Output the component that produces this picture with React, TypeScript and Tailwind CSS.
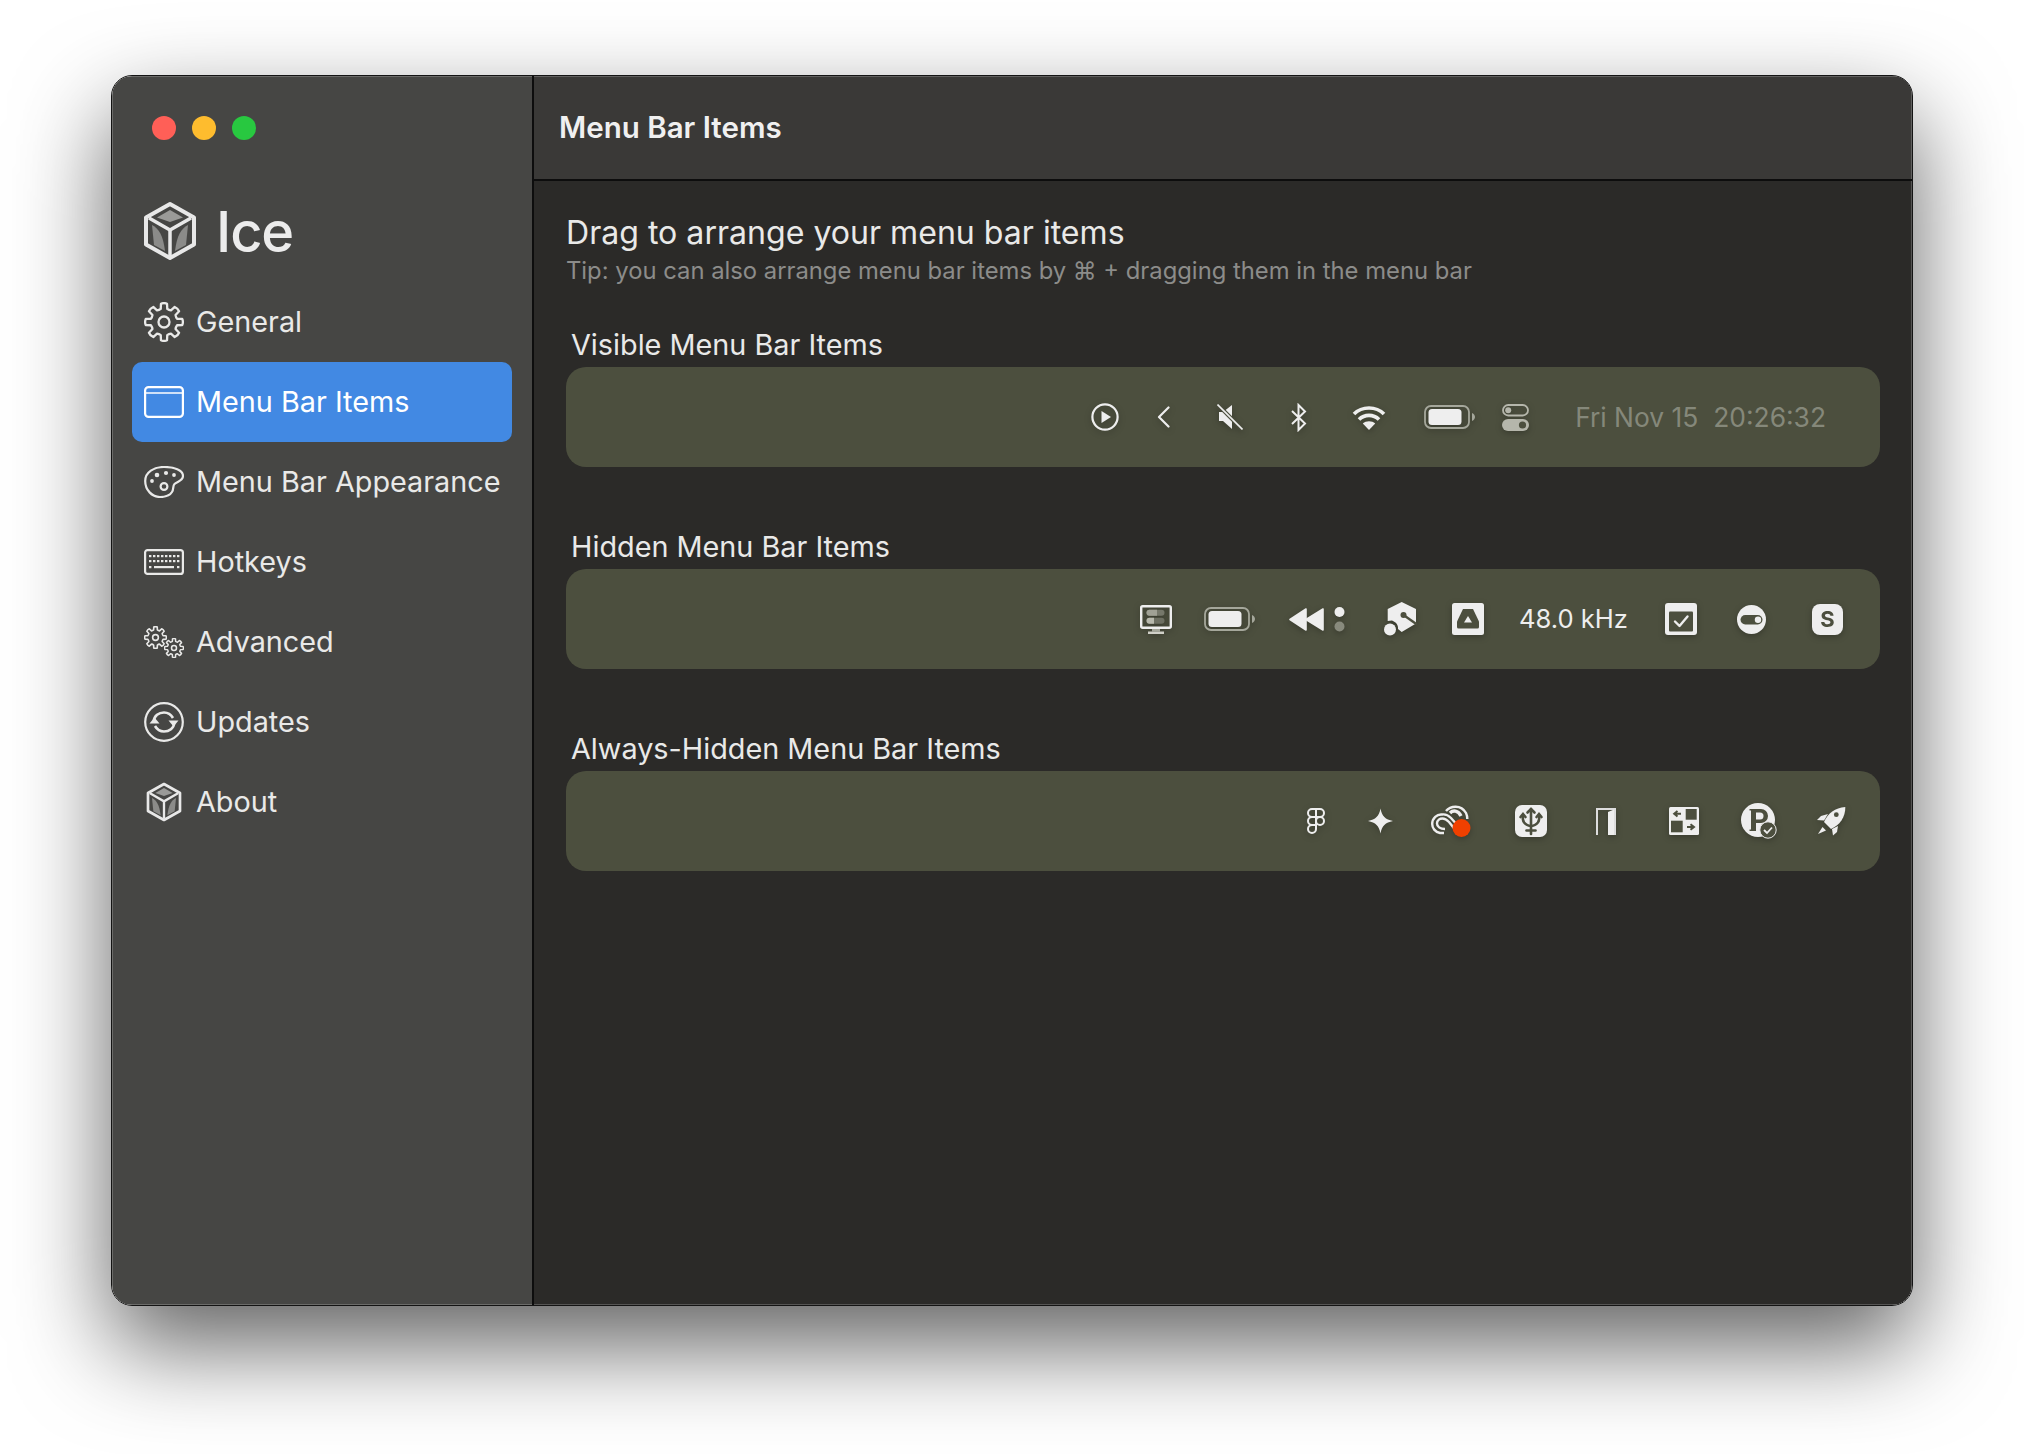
import React from "react";

type I = { className?: string };

function Cube({ className }: I) {
  return (
    <svg viewBox="0 0 54 60" className={className} fill="none">
      <path d="M27 3 L51 16.5 V43.5 L27 57 L3 43.5 V16.5 Z" stroke="#e8e8e8" strokeWidth="4" strokeLinejoin="round" />
      <path d="M6 17 L27 29 L48 17" stroke="#e8e8e8" strokeWidth="3.5" />
      <path d="M27 29 V55" stroke="#e8e8e8" strokeWidth="3.5" />
      <path d="M14 16.5 L27 9 L40 16.5 L27 21 Z" fill="#9a9a98" />
      <path d="M9 24 C16 28 20 34 22 50 L11 44 Z" fill="#8b8b89" />
      <path d="M45 24 C38 28 34 34 32 50 L43 44 Z" fill="#8b8b89" />
    </svg>
  );
}

function Gear({ className, hole = 5.5, stroke = 2.3 }: I & { hole?: number; stroke?: number }) {
  const teeth = 8;
  const pts: string[] = [];
  for (let i = 0; i < teeth; i++) {
    const a = (i * Math.PI * 2) / teeth;
    const step = Math.PI / teeth;
    const P = (r: number, t: number) => `${(20 + r * Math.sin(t)).toFixed(2)} ${(20 - r * Math.cos(t)).toFixed(2)}`;
    pts.push(`${i === 0 ? "M" : "L"}${P(18.5, a - step * 0.42)}`);
    pts.push(`Q${P(19.6, a)} ${P(18.5, a + step * 0.42)}`);
    pts.push(`L${P(13.5, a + step * 0.62)}`);
    pts.push(`Q${P(12.8, a + step)} ${P(13.5, a + step * 1.38)}`);
  }
  return (
    <svg viewBox="0 0 40 40" className={className} fill="none" stroke="currentColor" strokeWidth={stroke} strokeLinejoin="round">
      <path d={pts.join(" ") + "Z"} />
      <circle cx="20" cy="20" r={hole} />
    </svg>
  );
}

function GearIcon({ className }: I) {
  return <Gear className={className} />;
}

function Windowed({ className }: I) {
  return (
    <svg viewBox="0 0 40 32" className={className} fill="none" stroke="currentColor" strokeWidth="2.2">
      <rect x="1.1" y="1.1" width="37.8" height="29.8" rx="3.5" />
      <path d="M1 7 H39" strokeWidth="1.6" />
    </svg>
  );
}

function Palette({ className }: I) {
  return (
    <svg viewBox="0 0 40 32" className={className} fill="none" stroke="currentColor" strokeWidth="2.2">
      <path d="M1.2 15 C1.2 6 10 1 20 1 C30 1 39 4 39 10 C39 15 33 15.5 30.5 18 C28.5 20 30 23 28 26 C25.5 30 21 31 16 31 C8 31 1.2 24 1.2 15 Z" />
      <circle cx="20" cy="20.5" r="3.4" />
      <circle cx="8" cy="15" r="1.9" fill="currentColor" stroke="none" />
      <circle cx="13" cy="9" r="2.3" fill="currentColor" stroke="none" />
      <circle cx="22" cy="7" r="2.1" fill="currentColor" stroke="none" />
      <circle cx="30" cy="9" r="1.9" fill="currentColor" stroke="none" />
    </svg>
  );
}

function Keyboard({ className }: I) {
  const row1 = [6, 10, 14, 18, 22, 26, 30, 34];
  const row2 = [6, 10, 14, 18, 22, 26, 30, 34];
  return (
    <svg viewBox="0 0 40 26" className={className} fill="none" stroke="currentColor" strokeWidth="2.2">
      <rect x="1.1" y="1.1" width="37.8" height="23.8" rx="2.5" />
      <g fill="currentColor" stroke="none">
        {row1.map((x) => <rect key={x} x={x - 1} y="6" width="2.4" height="2.2" />)}
        {row2.map((x) => <rect key={x} x={x - 1} y="11" width="2.4" height="2.2" />)}
        <rect x="5" y="17" width="2.4" height="2.2" />
        <rect x="10" y="17" width="20" height="2.2" />
        <rect x="33" y="17" width="2.4" height="2.2" />
      </g>
    </svg>
  );
}

function Gears({ className }: I) {
  return (
    <div className={"relative " + (className ?? "")}>
      <Gear className="absolute left-0 top-0 h-[23px] w-[23px]" hole={5} stroke={2.8} />
      <Gear className="absolute right-0 bottom-0 h-[20px] w-[20px]" hole={5} stroke={3} />
    </div>
  );
}

function Updates({ className }: I) {
  return (
    <svg viewBox="0 0 40 40" className={className} fill="none" stroke="currentColor" strokeWidth="2.2">
      <circle cx="20" cy="20" r="18.8" />
      <path d="M9.5 20 C10 13.5 15 10.5 20 10.5 C24 10.5 27 12.5 29 16" strokeWidth="2.6" />
      <path d="M30.5 20 C30 26.5 25 29.5 20 29.5 C16 29.5 13 27.5 11 24" strokeWidth="2.6" />
      <path d="M24.5 18.5 H34.5 L29.5 24.5 Z" fill="currentColor" stroke="none" />
      <path d="M5.5 21.5 H15.5 L10.5 15.5 Z" fill="currentColor" stroke="none" />
    </svg>
  );
}

function PlayCircle() {
  return (
    <svg viewBox="0 0 28 28" className="h-[28px] w-[28px]" fill="none">
      <circle cx="14" cy="14" r="12.6" stroke="#eee" strokeWidth="2.2" />
      <path d="M10.5 8 L20 14 L10.5 20 Z" fill="#eee" />
    </svg>
  );
}

function Chevron() {
  return (
    <svg viewBox="0 0 13 22" className="h-[22px] w-[13px]" fill="none">
      <path d="M11.5 1.5 L2 11 L11.5 20.5" stroke="#eee" strokeWidth="2.2" strokeLinecap="round" strokeLinejoin="round" />
    </svg>
  );
}

function Mute() {
  return (
    <svg viewBox="0 0 26 26" className="h-[26px] w-[26px]" fill="none">
      <path d="M2 8 H6 L15 1 V21 L15 25 L6 17 H2 Z" fill="#eee" />
      <path d="M0.5 0.5 L25.5 25.5" stroke="#4c4f3e" strokeWidth="4" />
      <path d="M0.5 0.5 L25.5 25.5" stroke="#eee" strokeWidth="1.6" />
    </svg>
  );
}

function Bluetooth() {
  return (
    <svg viewBox="0 0 17 29" className="h-[29px] w-[17px]" fill="none">
      <path d="M2 8 L15 20.5 L8.5 27 V2 L15 8.5 L2 21" stroke="#eee" strokeWidth="2" strokeLinejoin="miter" />
    </svg>
  );
}

function Wifi() {
  return (
    <svg viewBox="0 0 34 25" className="h-[25px] w-[34px]" fill="none">
      <path d="M2 9 C10 1 24 1 32 9" stroke="#eee" strokeWidth="3.6" />
      <path d="M7 14.5 C12.5 9 21.5 9 27 14.5" stroke="#eee" strokeWidth="3.6" />
      <path d="M17 25 L10.8 18.5 C14 15.6 20 15.6 23.2 18.5 Z" fill="#eee" />
    </svg>
  );
}

function Battery() {
  return (
    <svg viewBox="0 0 51 24" className="h-[24px] w-[51px]" fill="none">
      <rect x="1" y="1" width="44" height="22" rx="6" stroke="#a5a79b" strokeWidth="1.8" />
      <rect x="4.5" y="4" width="33" height="16" rx="3.5" fill="#eee" />
      <path d="M48 8 C50 9 51 10.5 51 12 C51 13.5 50 15 48 16 Z" fill="#a5a79b" />
    </svg>
  );
}

function Toggles() {
  return (
    <svg viewBox="0 0 27 27" className="h-[27px] w-[27px]" fill="none">
      <rect x="1" y="1" width="25" height="10.5" rx="5.25" stroke="#b5b6ab" strokeWidth="1.8" />
      <circle cx="6.2" cy="6.2" r="3" fill="#b5b6ab" />
      <rect y="15" width="27" height="12" rx="6" fill="#b5b6ab" />
      <circle cx="20.5" cy="21" r="3.6" fill="#4c4f3e" />
    </svg>
  );
}

function Display() {
  return (
    <svg viewBox="0 0 32 29" className="h-[29px] w-[32px]" fill="none">
      <rect x="1.2" y="1.2" width="29.6" height="21.6" rx="1.5" stroke="#eee" strokeWidth="2.4" />
      <rect x="6.5" y="4.8" width="18" height="6" rx="3" fill="#75776a" />
      <path d="M9.5 4.8 H17 V10.8 H9.5 A3 3 0 0 1 9.5 4.8 Z" fill="#a0a195" />
      <rect x="6.5" y="12.8" width="18" height="6" rx="3" fill="#6d6f62" />
      <path d="M9.5 12.8 H14 V18.8 H9.5 A3 3 0 0 1 9.5 12.8 Z" fill="#b8b9ad" />
      <rect x="12" y="24" width="8" height="2.5" fill="#a5a79b" />
      <rect x="8" y="26.5" width="16" height="2.5" fill="#d0d0c8" />
    </svg>
  );
}

function Rewind() {
  return (
    <svg viewBox="0 0 56 25" className="h-[25px] w-[56px]" fill="none">
      <path d="M1 12.5 L17 2 V23 Z" fill="#eee" stroke="#eee" strokeWidth="1.6" strokeLinejoin="round" />
      <path d="M17 12.5 L34 2 V23 Z" fill="#eee" stroke="#eee" strokeWidth="1.6" strokeLinejoin="round" />
      <circle cx="50.5" cy="5" r="5" fill="#eee" />
      <circle cx="50.5" cy="19.5" r="5" fill="#888a7d" />
    </svg>
  );
}

function KeyHex() {
  return (
    <svg viewBox="0 0 33 34" className="h-[34px] w-[33px]" fill="none">
      <path d="M17.7 0 L32 7 V21.5 L17.7 30 L14 27 C14.5 23 12 20 8 18.5 L3.7 19 V7 Z" fill="#eee" />
      <circle cx="6" cy="27.5" r="6" fill="#eee" />
      <path d="M19.5 13 L33 22.5" stroke="#4c4f3e" strokeWidth="2.4" />
      <circle cx="19.5" cy="13" r="3" fill="#4c4f3e" />
    </svg>
  );
}

function Drive() {
  return (
    <svg viewBox="0 0 32 32" className="h-[32px] w-[32px]">
      <rect width="32" height="32" rx="2.5" fill="#eee" />
      <path d="M11 6 H21 L27 18.5 V24 A1.5 1.5 0 0 1 25.5 25.5 H6.5 A1.5 1.5 0 0 1 5 24 V18.5 Z" fill="#4c4f3e" />
      <path d="M16 13 L20 19.5 H12 Z" fill="#eee" />
    </svg>
  );
}

function CheckTile() {
  return (
    <svg viewBox="0 0 32 32" className="h-[32px] w-[32px]">
      <rect width="32" height="32" rx="3" fill="#eee" />
      <rect x="4" y="8.5" width="24" height="20" rx="1" fill="#4c4f3e" />
      <path d="M10 18.5 L14.5 23 L22.5 13.5" stroke="#eee" strokeWidth="2.4" fill="none" strokeLinecap="round" strokeLinejoin="round" />
    </svg>
  );
}

function RoundToggle() {
  return (
    <svg viewBox="0 0 29 29" className="h-[29px] w-[29px]">
      <circle cx="14.5" cy="14.5" r="14.5" fill="#eee" />
      <rect x="3.5" y="10" width="22" height="9.5" rx="4.75" fill="#4c4f3e" />
      <circle cx="21" cy="14.7" r="3.2" fill="#eee" />
    </svg>
  );
}

function FigmaIcon() {
  return (
    <svg viewBox="0 0 18 26" className="h-[26px] w-[18px]" fill="none" stroke="#eee" strokeWidth="2">
      <path d="M9 1 H5 A4 4 0 0 0 5 9 H9 Z" />
      <path d="M9 1 H13 A4 4 0 0 1 13 9 H9 Z" />
      <path d="M9 9 H5 A4 4 0 0 0 5 17 H9 Z" />
      <circle cx="13" cy="13" r="4" />
      <path d="M9 17 H5 A4 4 0 1 0 9 21 Z" />
    </svg>
  );
}

function Sparkle() {
  return (
    <svg viewBox="0 0 26 26" className="h-[26px] w-[25px]">
      <path d="M13 0 C14.5 8 18 11.5 26 13 C18 14.5 14.5 18 13 26 C11.5 18 8 14.5 0 13 C8 11.5 11.5 8 13 0 Z" fill="#eee" />
    </svg>
  );
}

function CloudDot() {
  return (
    <svg viewBox="0 0 40 32" className="h-[32px] w-[40px]" fill="none">
      <path d="M13 28 H9 C4 27 1.2 23 1.2 19 C1.2 13 6 9 11 9.5 C14 9 17 10 20 13 L28 22" stroke="#eee" strokeWidth="2.4" />
      <path d="M14 24 C9 24 6 21.5 6 18.5 C6 15 9 13.5 11.5 13.5 C14 13.5 16 15 18 17 L26 27" stroke="#eee" strokeWidth="2.4" />
      <path d="M15 6 C19 1 30 -1 35 8 C36 10 36.3 11 36.3 14" stroke="#eee" strokeWidth="2.4" />
      <path d="M19 8 C22 5 27 5 30 11" stroke="#eee" strokeWidth="3.4" />
      <circle cx="30.5" cy="23" r="9" fill="#f04000" />
    </svg>
  );
}

function UsbTile() {
  return (
    <svg viewBox="0 0 32 32" className="h-[32px] w-[32px]" fill="none">
      <rect width="32" height="32" rx="7" fill="#eee" />
      <g stroke="#4c4f3e" strokeWidth="2.6" strokeLinecap="round">
        <path d="M16 4 V29" />
        <path d="M12.5 7.5 L16 4 L19.5 7.5" />
        <path d="M16 21 C9 20 7 16 8 10" />
        <path d="M16 21 C23 20 25 16 24 10" />
        <path d="M5.5 12 L8 9 L10.5 12" />
        <path d="M21.5 12 L24 9 L26.5 12" />
        <path d="M11.5 25.5 H20.5" />
      </g>
    </svg>
  );
}

function Door() {
  return (
    <svg viewBox="0 0 20 27" className="h-[27px] w-[20px]" fill="none">
      <path d="M1 27 V1 H19 V27" stroke="#ddd" strokeWidth="2" />
      <path d="M12 4 L18 1.5 V27 H12 Z" fill="#eee" />
    </svg>
  );
}

function ArrowTile() {
  return (
    <svg viewBox="0 0 30 28" className="h-[28px] w-[30px]">
      <rect width="30" height="28" rx="1.5" fill="#eee" />
      <rect x="16.7" y="2" width="11" height="10.7" fill="#4c4f3e" />
      <rect x="2" y="13.7" width="11.7" height="11.6" fill="#4c4f3e" />
      <path d="M12 6.7 H6 M8.5 4 L5.2 6.7 L8.5 9.4" stroke="#4c4f3e" strokeWidth="2" fill="none" />
      <path d="M18 20 H24.5 M21.5 17.3 L25 20 L21.5 22.7" stroke="#4c4f3e" strokeWidth="2" fill="none" />
    </svg>
  );
}

function PCheck() {
  return (
    <svg viewBox="0 0 36 36" className="h-[36px] w-[36px]" fill="none">
      <circle cx="17" cy="17" r="17" fill="#eee" />
      <path d="M8.5 6 H20 A7 7 0 0 1 20 20 H15 V28 H8.5 V26.5 H10 V7.5 H8.5 Z" fill="#4c4f3e" />
      <path d="M15 9.5 H19 A3.5 3.5 0 0 1 19 16.5 H15 Z" fill="#eee" />
      <circle cx="27" cy="27" r="8.2" fill="#4c4f3e" stroke="#eee" strokeWidth="1" />
      <path d="M23 27 L26 30 L31 24.5" stroke="#eee" strokeWidth="1.8" />
    </svg>
  );
}

function Rocket() {
  return (
    <svg viewBox="0 0 29 29" className="h-[29px] w-[29px]">
      <path d="M28.3 0 C18 1 11 6 7 15 L14 22 C23 18 28.5 10 28.3 0 Z" fill="#eee" />
      <path d="M11 7 L4 9 L0 13 L7 13.5 Z" fill="#eee" />
      <path d="M21 19 L20 25 L16 28.5 L15 22 Z" fill="#eee" />
      <path d="M5.5 20 L9 23.5 L1 27 Z" fill="#eee" />
      <circle cx="19.3" cy="7.7" r="2.4" fill="#4c4f3e" />
    </svg>
  );
}

const nav = [
  { label: "General", Icon: GearIcon, cls: "h-[40px] w-[40px]" },
  { label: "Menu Bar Items", Icon: Windowed, cls: "h-[32px] w-[40px]", active: true },
  { label: "Menu Bar Appearance", Icon: Palette, cls: "h-[32px] w-[40px]" },
  { label: "Hotkeys", Icon: Keyboard, cls: "h-[26px] w-[40px]" },
  { label: "Advanced", Icon: Gears, cls: "h-[32px] w-[40px]" },
  { label: "Updates", Icon: Updates, cls: "h-[40px] w-[40px]" },
  { label: "About", Icon: Cube, cls: "h-[40px] w-[36px]" },
];

function Panel({ children }: { children: React.ReactNode }) {
  return <div className="flex h-[100px] items-center justify-end rounded-[20px] bg-[#4c4f3e]">{children}</div>;
}

function Tile({ ml, children }: { ml: string; children: React.ReactNode }) {
  return <div className={`flex items-center justify-center drop-shadow-[0_2px_3px_rgba(0,0,0,0.25)] ${ml}`}>{children}</div>;
}

export default function App() {
  return (
    <div className="h-[1454px] w-[2024px] overflow-hidden bg-white pl-[111px] pt-[75px] font-['Inter',sans-serif]">
      <div className="flex h-[1231px] w-[1802px] overflow-hidden rounded-[21px] border border-[#141414] text-[#e9e9e8] shadow-[0_40px_95px_rgba(0,0,0,0.62)]">
        <aside className="flex w-[422px] shrink-0 flex-col border-r-2 border-[#0d0d0d] bg-[#464644] px-[20px] shadow-[inset_1px_1px_0_rgba(255,255,255,0.2),inset_0_-1px_0_rgba(255,255,255,0.2)]">
          <div className="flex h-[64px] items-end gap-[16px] pl-[20px]">
            <span className="h-[24px] w-[24px] rounded-full bg-[#ff5f57]" />
            <span className="h-[24px] w-[24px] rounded-full bg-[#febc2e]" />
            <span className="h-[24px] w-[24px] rounded-full bg-[#28c840]" />
          </div>
          <div className="mt-[61px] flex h-[60px] items-center pl-[11px]">
            <Cube className="h-[60px] w-[54px]" />
            <span className="ml-[19px] mt-[2px] text-[56px] font-medium leading-none tracking-[-0.02em] text-[#ececec]">Ice</span>
          </div>
          <nav className="mt-[21px] flex flex-col">
            {nav.map(({ label, Icon, cls, active }) => (
              <div
                key={label}
                className={`flex h-[80px] items-center rounded-[10px] pl-[12px] ${active ? "bg-[#4289e3] text-white" : ""}`}
              >
                <span className="flex w-[40px] justify-center">
                  <Icon className={cls} />
                </span>
                <span className="ml-[12px] text-[28.8px] leading-none">{label}</span>
              </div>
            ))}
          </nav>
        </aside>
        <main className="flex min-w-0 flex-1 flex-col bg-[#2b2a28]">
          <header className="flex h-[105px] shrink-0 items-center border-b-2 border-[#0d0d0d] bg-[#3a3937] pl-[25px] shadow-[inset_0_1px_0_rgba(255,255,255,0.2),inset_-1px_0_0_rgba(255,255,255,0.2)]">
            <h1 className="text-[29.5px] font-semibold leading-none text-[#f0f0f0]">Menu Bar Items</h1>
          </header>
          <div className="flex flex-1 flex-col pl-[32px] pr-[32px] shadow-[inset_-1px_-1px_0_rgba(255,255,255,0.2)]">
            <h2 className="mt-[30px] text-[32.1px] leading-[44px] text-[#e9e9e8]">Drag to arrange your menu bar items</h2>
            <p className="text-[23.8px] leading-[31px] text-[#8c8c8a]">Tip: you can also arrange menu bar items by ⌘ + dragging them in the menu bar</p>
            <section className="mt-[37px]">
              <h3 className="pl-[5px] text-[28.8px] leading-[44px]">Visible Menu Bar Items</h3>
              <Panel>
                <div className="flex items-center pr-[54px]">
                  <Tile ml=""><PlayCircle /></Tile>
                  <Tile ml="ml-[38px]"><Chevron /></Tile>
                  <Tile ml="ml-[47px]"><Mute /></Tile>
                  <Tile ml="ml-[47px]"><Bluetooth /></Tile>
                  <Tile ml="ml-[45px]"><Wifi /></Tile>
                  <Tile ml="ml-[38px]"><Battery /></Tile>
                  <Tile ml="ml-[27px]"><Toggles /></Tile>
                  <span className="ml-[46px] whitespace-pre text-[26.4px] leading-none text-[#85887a]">Fri Nov 15  20:26:32</span>
                </div>
              </Panel>
            </section>
            <section className="mt-[58px]">
              <h3 className="pl-[5px] text-[28.8px] leading-[44px]">Hidden Menu Bar Items</h3>
              <Panel>
                <div className="flex items-center pr-[37px]">
                  <Tile ml=""><Display /></Tile>
                  <Tile ml="ml-[32px]"><Battery /></Tile>
                  <Tile ml="ml-[34px]"><Rewind /></Tile>
                  <Tile ml="ml-[39px]"><KeyHex /></Tile>
                  <Tile ml="ml-[35px]"><Drive /></Tile>
                  <span className="ml-[35px] text-[25.6px] leading-none text-[#eeeeee]">48.0 kHz</span>
                  <Tile ml="ml-[37px]"><CheckTile /></Tile>
                  <Tile ml="ml-[40px]"><RoundToggle /></Tile>
                  <Tile ml="ml-[46px]">
                    <div className="flex h-[31px] w-[31px] items-center justify-center rounded-[8px] bg-[#eeeeee] text-[22px] font-bold leading-none text-[#4c4f3e]">S</div>
                  </Tile>
                </div>
              </Panel>
            </section>
            <section className="mt-[58px]">
              <h3 className="pl-[5px] text-[28.8px] leading-[44px]">Always-Hidden Menu Bar Items</h3>
              <Panel>
                <div className="flex items-center pr-[34px]">
                  <Tile ml=""><FigmaIcon /></Tile>
                  <Tile ml="ml-[43px]"><Sparkle /></Tile>
                  <Tile ml="ml-[38px]"><CloudDot /></Tile>
                  <Tile ml="ml-[44px]"><UsbTile /></Tile>
                  <Tile ml="ml-[49px]"><Door /></Tile>
                  <Tile ml="ml-[53px]"><ArrowTile /></Tile>
                  <Tile ml="ml-[42px]"><PCheck /></Tile>
                  <Tile ml="ml-[40px]"><Rocket /></Tile>
                </div>
              </Panel>
            </section>
          </div>
        </main>
      </div>
    </div>
  );
}
